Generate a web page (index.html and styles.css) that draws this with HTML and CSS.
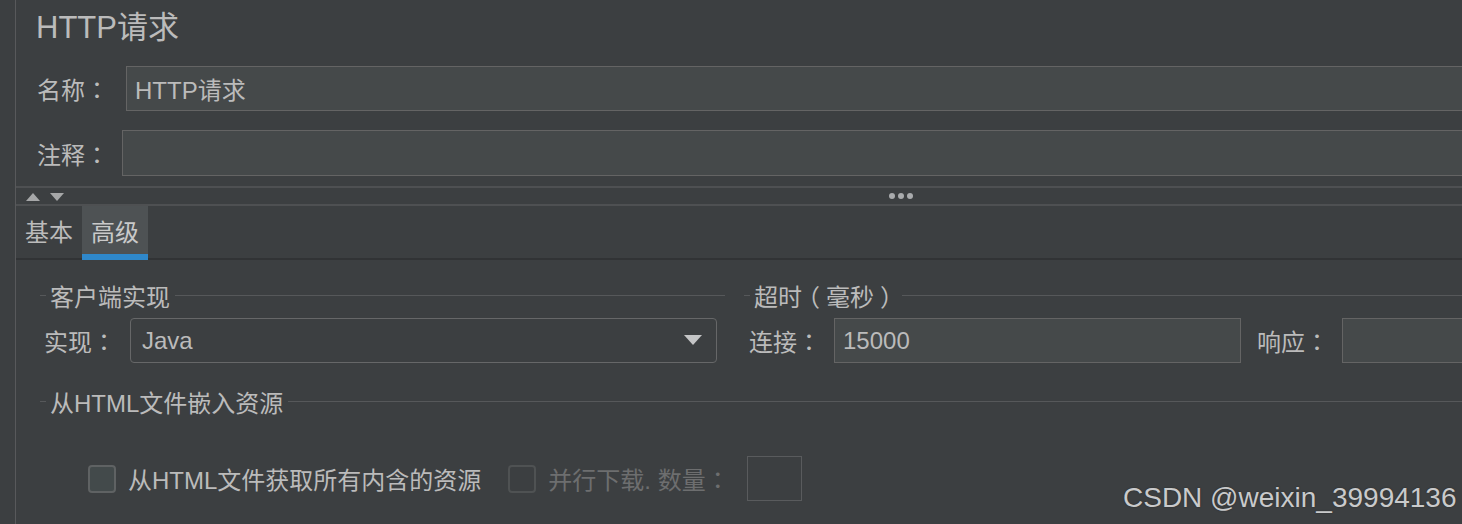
FILE: index.html
```html
<!DOCTYPE html>
<html lang="zh-CN">
<head>
<meta charset="utf-8">
<title>HTTP请求</title>
<link rel="stylesheet" href="styles.css">
</head>
<body>
<div class="app">
  <div class="gutter"></div>
  <div class="main">
    <div class="inner">
      <h1 class="title">HTTP请求</h1>
      <div class="field-row name-row">
        <span class="label name-label">名称<span class="colon" lang="ja">：</span></span>
        <div class="text-input">HTTP请求</div>
      </div>
      <div class="field-row comment-row">
        <span class="label comment-label">注释<span class="colon" lang="ja">：</span></span>
        <div class="text-input"></div>
      </div>
      <div class="splitter">
        <div class="arrows">
          <svg class="arrow" width="14" height="8" viewBox="0 0 14 8"><path d="M0 8 L7 0 L14 8 Z" fill="#a6a7a8"/></svg>
          <svg class="arrow" width="14" height="8" viewBox="0 0 14 8"><path d="M0 0 L14 0 L7 8 Z" fill="#a6a7a8"/></svg>
        </div>
        <div class="dots"><span class="dot"></span><span class="dot"></span><span class="dot"></span></div>
        <div></div>
      </div>
      <div class="tabs">
        <div class="tab">基本</div>
        <div class="tab active">高级</div>
      </div>
      <div class="panel">
        <div class="group-row">
          <section class="group client">
            <div class="legend"><span class="legend-text">客户端实现</span></div>
            <div class="row">
              <span class="label impl-label">实现<span class="colon" lang="ja">：</span></span>
              <div class="combo">
                <span class="combo-value">Java</span>
                <svg class="combo-arrow" width="18" height="10" viewBox="0 0 18 10"><path d="M0 0 L18 0 L9 10 Z" fill="#c4c5c6"/></svg>
              </div>
            </div>
          </section>
          <section class="group timeout">
            <div class="legend"><span class="legend-text">超时<span class="paren">（</span>毫秒<span class="paren">）</span></span></div>
            <div class="row">
              <span class="label connect-label">连接<span class="colon" lang="ja">：</span></span>
              <div class="text-input connect-input">15000</div>
              <span class="label response-label">响应<span class="colon" lang="ja">：</span></span>
              <div class="text-input response-input"></div>
            </div>
          </section>
        </div>
        <section class="group embed">
          <div class="legend"><span class="legend-text">从HTML文件嵌入资源</span></div>
          <div class="check-row">
            <span class="checkbox"></span>
            <span class="check-label">从HTML文件获取所有内含的资源</span>
            <span class="checkbox disabled"></span>
            <span class="check-label disabled-text">并行下载. 数量<span class="colon" lang="ja">：</span></span>
            <div class="small-input"></div>
          </div>
        </section>
      </div>
    </div>
  </div>
</div>
<div class="watermark">CSDN @weixin_39994136</div>
</body>
</html>
```
FILE: styles.css
```css
* { box-sizing: border-box; }
html, body {
  margin: 0;
  padding: 0;
  width: 1462px;
  height: 524px;
  overflow: hidden;
  background: #3c3f41;
}
body {
  font-family: "Liberation Sans", "Noto Sans CJK SC", sans-serif;
  color: #bbbbbb;
  font-size: 24px;
  position: relative;
}
.colon { font-family: "Noto Sans CJK JP", sans-serif; }
.paren {
  font-feature-settings: "halt" 1;
  padding: 0 6px;
}

.app {
  display: flex;
  height: 524px;
}
.gutter {
  width: 16px;
  flex: none;
  border-right: 1px solid #58595b;
}
.main {
  flex: 1;
  overflow: hidden;
}
.inner {
  width: 1770px;
}

.title {
  margin: 0;
  height: 56px;
  line-height: 56px;
  font-size: 31px;
  font-weight: normal;
  padding-left: 20px;
  color: #bbbbbb;
}

.field-row {
  display: flex;
  align-items: center;
  padding-left: 21px;
}
.name-row { margin-top: 10px; height: 45px; }
.comment-row { margin-top: 19px; height: 46px; }
.name-label { width: 89px; }
.comment-label { width: 85px; }
.label { white-space: nowrap; flex: none; }

.text-input {
  flex: 1;
  height: 100%;
  background: #45494a;
  border: 1px solid #646464;
  padding-left: 8px;
  display: flex;
  align-items: center;
  color: #bbbbbb;
}

.splitter {
  margin-top: 10px;
  height: 20px;
  border-top: 2px solid #4e5052;
  border-bottom: 2px solid #4e5052;
  display: grid;
  grid-template-columns: 1fr auto 1fr;
  align-items: center;
}
.arrows {
  display: flex;
  gap: 10px;
  padding-left: 10px;
  padding-top: 1px;
}
.arrow { display: block; }
.dots {
  display: flex;
  gap: 3px;
}
.dot {
  width: 6px;
  height: 6px;
  border-radius: 50%;
  background: #a9abad;
}

.tabs {
  display: flex;
  height: 54px;
  border-bottom: 2px solid #313335;
}
.tab {
  height: 48px;
  padding: 5px 9px 0;
  line-height: 44px;
  color: #bbbbbb;
}
.tab.active {
  background: #4e5254;
  height: 54px;
  border-bottom: 6px solid #2f88cb;
  margin-bottom: -2px;
  color: #c9c9c9;
}

.panel {
  padding-left: 24px;
}
.group-row {
  display: flex;
  gap: 19px;
  margin-top: 20px;
}
.group.client { width: 685px; flex: none; }
.group.timeout { flex: 1; }

.legend {
  display: flex;
  align-items: center;
  height: 30px;
}
.legend::before {
  content: "";
  width: 6px;
  height: 1px;
  background: #56585a;
  margin-right: 4px;
}
.legend::after {
  content: "";
  flex: 1;
  height: 1px;
  background: #56585a;
  margin-left: 5px;
}
.timeout .legend::after { margin-left: 4px; }
.legend-text { white-space: nowrap; }

.row {
  display: flex;
  align-items: center;
  height: 45px;
  margin-top: 8px;
}
.client .row { padding: 0 8px 0 4px; }
.timeout .row { padding-left: 5px; }
.impl-label { width: 86px; }
.connect-label { width: 85px; }
.response-label { width: 85px; margin-left: 16px; }

.combo {
  flex: 1;
  height: 100%;
  border: 1px solid #666768;
  border-radius: 4px;
  display: flex;
  align-items: center;
  padding: 0 14px 0 11px;
}
.combo-value { flex: 1; }
.combo-arrow { display: block; margin-top: -2px; }

.connect-input { flex: none; width: 407px; }
.response-input { flex: 1; }

.group.embed { margin-top: 23px; }
.check-row {
  display: flex;
  align-items: center;
  height: 45px;
  margin-top: 40px;
  padding-left: 48px;
}
.checkbox {
  width: 28px;
  height: 28px;
  border: 2px solid #5f6263;
  border-radius: 4px;
  background: #434a4b;
  flex: none;
}
.checkbox.disabled {
  background: transparent;
  border-color: #4f5253;
  margin-left: 27px;
}
.check-label {
  margin-left: 12px;
  white-space: nowrap;
}
.disabled-text { color: #6d6e6f; }
.small-input {
  width: 55px;
  height: 45px;
  border: 1px solid #595b5d;
  margin-left: 17px;
}

.watermark {
  position: absolute;
  left: 1123px;
  top: 484px;
  font-family: "Liberation Sans", sans-serif;
  font-size: 28px;
  line-height: 28px;
  color: #c9cacb;
  text-shadow: 0 0 2px rgba(0, 0, 0, 0.35);
  white-space: nowrap;
}
```
